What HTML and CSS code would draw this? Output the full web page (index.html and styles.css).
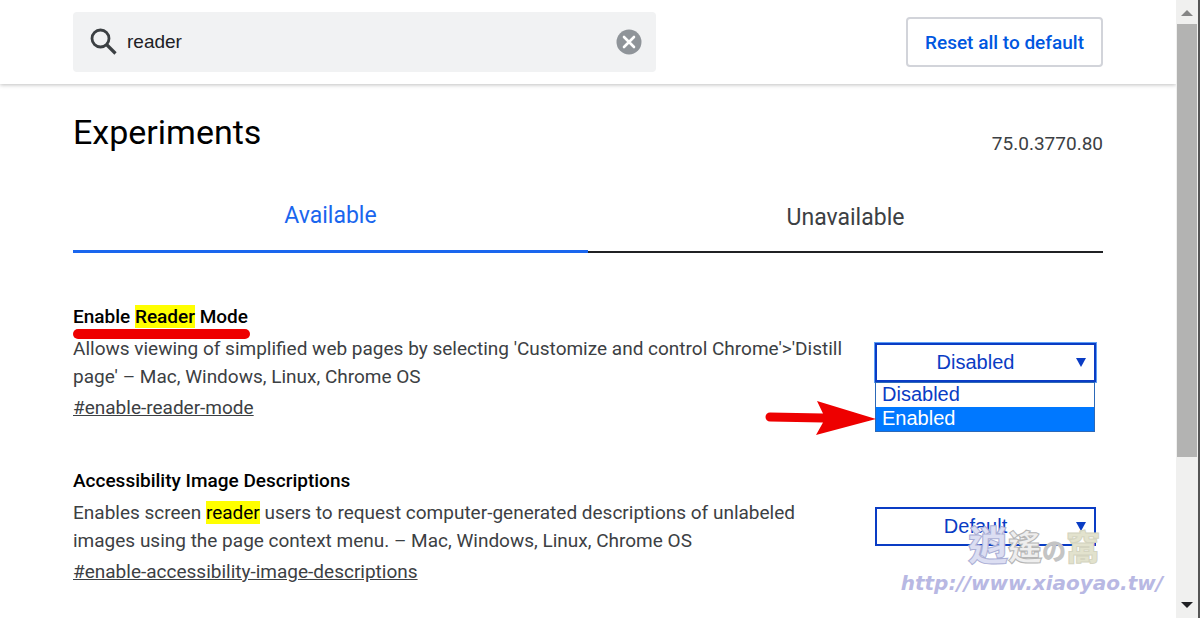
FILE: index.html
```
<!DOCTYPE html>
<html lang="en">
<head>
  <meta charset="utf-8">
  <title>Experiments</title>
  <link rel="stylesheet" href="styles.css">
</head>
<body>
  <div class="window">
    <div class="page">
      <!-- Search bar -->
      <header class="header">
        <div class="search">
          <svg class="search-icon" viewBox="0 0 28 28" aria-hidden="true">
            <circle cx="10.500" cy="10.500" r="8.500" fill="none" stroke="#3c4043" stroke-width="2.800"/>
            <path d="M16.500 16.500L25.500 25.500" stroke="#3c4043" stroke-width="3.200"/>
          </svg>
          <input type="text" class="search-input" value="reader" aria-label="Search flags">
          <button class="clear-btn" aria-label="Clear search">
            <svg viewBox="0 0 26 26">
              <circle cx="13" cy="13" r="12.500" fill="#8f9499"/>
              <path d="M8 8l10 10M18 8l-10 10" stroke="#fff" stroke-width="2.600" stroke-linecap="round"/>
            </svg>
          </button>
        </div>
        <button class="reset-btn">Reset all to default</button>
      </header>

      <main class="content">
        <div class="title-row">
          <h1>Experiments</h1>
          <span class="version">75.0.3770.80</span>
        </div>

        <div class="tabs">
          <button class="tab active">Available</button>
          <button class="tab">Unavailable</button>
        </div>

        <!-- Experiment list -->
        <div class="experiments">
          <section class="experiment">
            <div class="info">
              <h2 class="marked"><label for="readerMode">Enable <mark>Reader</mark> Mode</label></h2>
              <p>Allows viewing of simplified web pages by selecting 'Customize and control Chrome'&gt;'Distill page' – Mac, Windows, Linux, Chrome OS</p>
              <a href="#enable-reader-mode">#enable-reader-mode</a>
            </div>
            <div class="control open">
              <select id="readerMode">
                <option>Disabled</option>
                <option>Enabled</option>
              </select>
              <span class="caret"></span>
              <ul class="menu">
                <li>Disabled</li>
                <li class="selected">Enabled</li>
              </ul>
              <svg class="arrow" viewBox="0 0 112 34" aria-hidden="true">
                <path d="M5 11.500L58 12.500L52 0L111 18L51 34L58 21.500L5 20.500A4.500 4.500 0 0 1 5 11.500Z" fill="#ee0000"/>
              </svg>
            </div>
          </section>

          <section class="experiment">
            <div class="info">
              <h2><label for="imageDescriptions">Accessibility Image Descriptions</label></h2>
              <p>Enables screen <mark>reader</mark> users to request computer-generated descriptions of unlabeled images using the page context menu. – Mac, Windows, Linux, Chrome OS</p>
              <a href="#enable-accessibility-image-descriptions">#enable-accessibility-image-descriptions</a>
            </div>
            <div class="control">
              <select id="imageDescriptions">
                <option>Default</option>
                <option>Enabled</option>
                <option>Disabled</option>
              </select>
              <span class="caret"></span>
            </div>
          </section>
        </div>
      </main>
    </div>

    <!-- Scrollbar -->
    <div class="scrollbar">
      <svg class="scroll-arrow" viewBox="0 0 12 6"><path d="M0 6L6 0L12 6Z" fill="#858585"/></svg>
      <div class="scroll-track"><div class="thumb"></div></div>
      <svg class="scroll-arrow" viewBox="0 0 12 6"><path d="M0 0H12L6 6Z" fill="#202124"/></svg>
    </div>

    <div class="watermark">
      <div class="watermark-name"><span class="violet">逍</span><span class="gray">遙</span><span class="small">の</span><span class="olive">窩</span></div>
      <div class="watermark-url">http://www.xiaoyao.tw/</div>
    </div>
  </div>
</body>
</html>
```
FILE: styles.css
```
* {
  box-sizing: border-box;
}

body {
  margin: 0;
  font-family: Roboto, "Liberation Sans", sans-serif;
  font-size: 19px;
  color: #3c4043;
  background: #fff;
  overflow: hidden;
}

button,
input,
select {
  font-family: inherit;
  font-size: inherit;
}

.window {
  position: relative;
  display: flex;
  height: 100vh;
}

.page {
  flex: 1;
  min-width: 0;
  overflow: hidden;
}

/* Header */
.header {
  display: flex;
  justify-content: space-between;
  align-items: center;
  gap: 24px;
  padding: 12px 73px;
  box-shadow: 0 1px 4px rgba(0, 0, 0, 0.25);
}

.search {
  display: flex;
  align-items: center;
  flex: 0 1 583px;
  height: 60px;
  padding: 0 14px 0 17px;
  background: #f1f2f3;
  border-radius: 4px;
}

.search-icon {
  width: 28px;
  height: 28px;
}

.search-input {
  flex: 1;
  min-width: 0;
  padding: 0 9px;
  border: none;
  outline: none;
  background: none;
  color: #202124;
  font-family: "Liberation Sans", Arial, sans-serif;
  font-size: 19px;
}

.clear-btn {
  display: flex;
  width: 26px;
  height: 26px;
  padding: 0;
  border: none;
  background: none;
}

.reset-btn {
  height: 50px;
  padding: 0 17px;
  border: 2px solid #d2d4da;
  border-radius: 4px;
  background: #fff;
  color: #0057e0;
  font-weight: 500;
}

/* Title and tabs */
.content {
  padding: 24px 73px;
}

.title-row {
  display: flex;
  justify-content: space-between;
  align-items: flex-end;
}

h1 {
  margin: 0;
  color: #000;
  font-size: 34px;
  font-weight: 400;
  line-height: 48px;
}

.version {
  line-height: 24px;
}

.tabs {
  display: flex;
  margin-top: 21px;
}

.tab {
  flex: 1;
  height: 76px;
  padding: 6px 0 0;
  border: none;
  border-bottom: 2px solid #202124;
  background: none;
  color: #3c4043;
  font-size: 23px;
}

.tab.active {
  padding-top: 4px;
  border-bottom: 3px solid #1a66ee;
  color: #1a66ee;
}

/* Experiments */
.experiments {
  display: flex;
  flex-direction: column;
  gap: 47px;
  padding: 52px 7px 0 0;
}

.experiment {
  display: flex;
  justify-content: space-between;
  gap: 24px;
}

.info {
  flex: 1;
  line-height: 28px;
}

h2 {
  margin: 0 0 6px;
  color: #000;
  font-size: 19px;
  font-weight: 500;
  line-height: 24px;
}

.marked label {
  position: relative;
}

.marked label::after {
  content: "";
  position: absolute;
  left: 0;
  right: -2px;
  top: 24px;
  height: 10px;
  border-radius: 5px;
  background: #ee0000;
}

mark {
  background: #ff0;
  color: #000;
}

p {
  margin: 0 0 3px;
}

a {
  color: inherit;
}

.control {
  position: relative;
  width: 221px;
  padding-top: 38px;
  font-family: "Liberation Sans", Arial, sans-serif;
  font-size: 20px;
  color: #0a3cc4;
}

select {
  display: block;
  width: 100%;
  height: 39px;
  padding: 0 20px 2px 0;
  border: 2px solid #0a3cc4;
  border-radius: 0;
  background: #fff;
  color: #0a3cc4;
  text-align-last: center;
  appearance: none;
}

.open select {
  box-shadow: 0 0 0 1px #5b9df5;
}

.caret {
  position: absolute;
  right: 10px;
  top: 53px;
  border: 5px solid transparent;
  border-top: 9px solid #0a3cc4;
  border-bottom: none;
}

.menu {
  position: absolute;
  left: 0;
  right: 1px;
  top: 77px;
  margin: 0;
  padding: 0;
  border: 1px solid #2c69b8;
  background: #fff;
  list-style: none;
  line-height: 22px;
}

.menu li {
  padding: 0 6px 2px;
}

.menu .selected {
  background: #0078ff;
  color: #fff;
}

.arrow {
  position: absolute;
  right: 219px;
  top: 96px;
  width: 112px;
  height: 34px;
}

/* Scrollbar */
.scrollbar {
  display: flex;
  flex-direction: column;
  align-items: center;
  width: 24px;
  padding: 10px 0;
  border-right: 2px solid #555;
  background: #f0f0ef;
}

.scroll-arrow {
  width: 12px;
  height: 6px;
}

.scroll-track {
  flex: 1;
  width: 20px;
  padding: 8px 0;
}

.thumb {
  height: 76%;
  background: #b3b3b2;
}

/* Site stamp */
.watermark {
  position: absolute;
  right: 37px;
  bottom: 23px;
  text-align: right;
}

.watermark-name {
  padding-right: 63px;
  font-family: "Noto Sans CJK TC", sans-serif;
  font-size: 34px;
  font-weight: 900;
  line-height: 42px;
  color: #fff;
}

.violet {
  color: #dcdef2;
  font-size: 40px;
  -webkit-text-stroke: 1px #aaaed5;
}

.gray {
  color: #eee;
  -webkit-text-stroke: 1px #b5b5b5;
}

.small {
  color: #c4c4c4;
  font-size: 24px;
}

.olive {
  color: #e2e2cd;
  -webkit-text-stroke: 1px #d4d4c0;
}

.watermark-url {
  font-family: "DejaVu Sans", sans-serif;
  font-size: 20px;
  font-style: italic;
  font-weight: 700;
  line-height: 24px;
  color: #b8b8e3;
}
```
